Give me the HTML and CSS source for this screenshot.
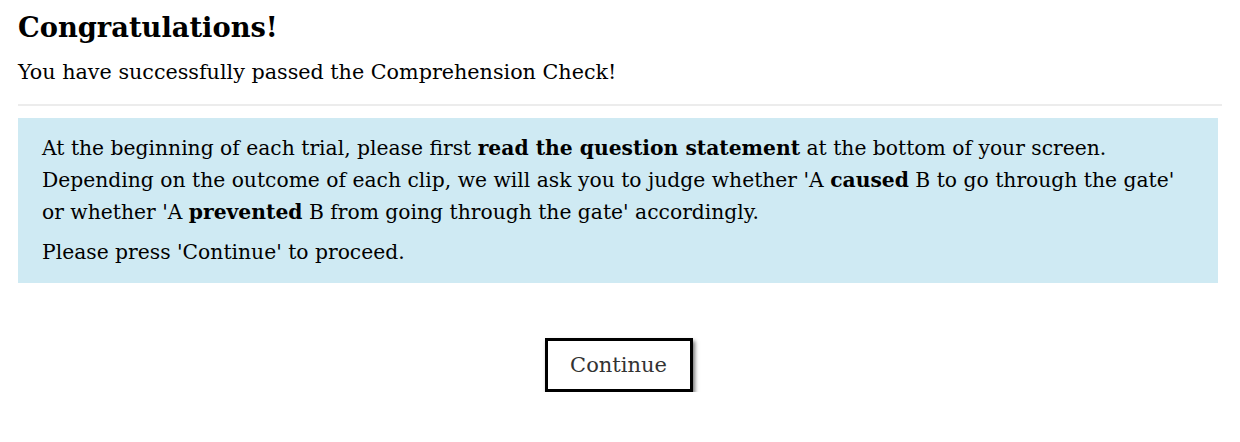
FILE: index.html
```html
<!DOCTYPE html>
<html lang="en">
<head>
<meta charset="utf-8">
<title>Comprehension Check</title>
<link rel="stylesheet" href="styles.css">
</head>
<body>
<main class="page">
  <h1 class="title">Congratulations!</h1>
  <p class="subtitle">You have successfully passed the Comprehension Check!</p>
  <hr class="divider">
  <section class="info">
    <p class="info-text">At the beginning of each trial, please first <b>read the question statement</b> at the bottom of your screen.<br>Depending on the outcome of each clip, we will ask you to judge whether 'A <b>caused</b> B to go through the gate'<br>or whether 'A <b>prevented</b> B from going through the gate' accordingly.</p>
    <p class="info-text info-last">Please press 'Continue' to proceed.</p>
  </section>
  <div class="actions">
    <button class="btn" type="button">Continue</button>
  </div>
</main>
</body>
</html>
```
FILE: styles.css
```css
html, body {
  margin: 0;
  padding: 0;
  background: #ffffff;
}
body {
  font-family: "DejaVu Serif", "Liberation Serif", serif;
  color: #000;
}
.page {
  padding: 0 18px;
}
.title {
  font-size: 27.3px;
  font-weight: bold;
  line-height: 34px;
  margin: 10px 0 0 0;
}
.subtitle {
  font-size: 20.7px;
  line-height: 32px;
  margin: 12px 0 0 0;
}
.divider {
  border: 0;
  border-top: 2px solid #ececec;
  height: 0;
  margin: 16px 0 0 0;
}
.info {
  max-width: 1200px;
  margin-top: 12px;
  background: #cfeaf3;
  padding: 14px 24px 15px 24px;
  box-sizing: border-box;
}
.info-text {
  font-size: 20.3px;
  line-height: 32px;
  margin: 0;
  white-space: nowrap;
}
.info-last {
  margin-top: 8px;
}
.actions {
  display: flex;
  justify-content: center;
  margin-top: 55px;
}
.btn {
  font-family: "DejaVu Serif", "Liberation Serif", serif;
  font-size: 21px;
  color: #333;
  background: #fff;
  border: 3px solid #000;
  border-radius: 0;
  height: 54px;
  width: 148px;
  padding: 0;
  margin-left: -3px;
  box-shadow: 2px 3px 4px rgba(0, 0, 0, 0.55);
  cursor: pointer;
}
```
